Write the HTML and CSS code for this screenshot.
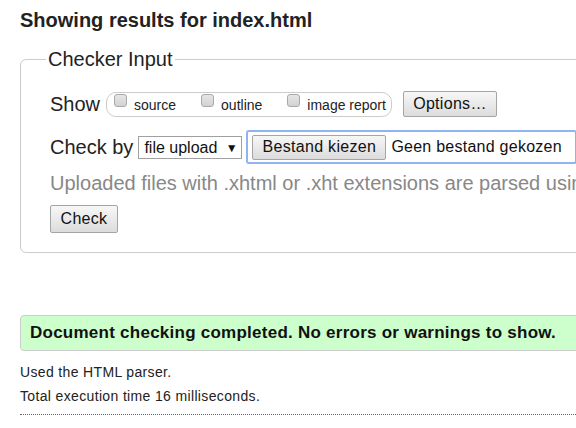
FILE: index.html
```html
<!DOCTYPE html>
<html lang="en">
<head>
<meta charset="utf-8">
<title>Showing results for index.html</title>
<link rel="stylesheet" href="styles.css">
</head>
<body>
<div class="page">
  <h2 class="title">Showing results for index.html</h2>
  <fieldset class="checker">
    <legend class="legend">Checker Input</legend>
    <div class="row row-show">
      <span class="label">Show</span>
      <div class="pill">
        <label class="opt"><span class="box"></span><span class="opt-text">source</span></label>
        <label class="opt"><span class="box"></span><span class="opt-text">outline</span></label>
        <label class="opt"><span class="box"></span><span class="opt-text">image report</span></label>
      </div>
      <button class="btn btn-options" type="button">Options…</button>
    </div>
    <div class="row row-check">
      <span class="label">Check by</span>
      <div class="select">file upload <span class="caret">▼</span></div>
      <div class="file">
        <button class="btn btn-file" type="button">Bestand kiezen</button>
        <span class="file-name">Geen bestand gekozen</span>
      </div>
    </div>
    <p class="hint">Uploaded files with .xhtml or .xht extensions are parsed using the XML parser.</p>
    <button class="btn btn-check" type="button">Check</button>
  </fieldset>
  <div class="success">Document checking completed. No errors or warnings to show.</div>
  <p class="meta meta-first">Used the HTML parser.</p>
  <p class="meta">Total execution time 16 milliseconds.</p>
  <hr class="sep">
</div>
</body>
</html>
```
FILE: styles.css
```css
html, body {
  margin: 0;
  padding: 0;
  overflow: hidden;
  background: #fff;
}
body {
  font-family: "Liberation Sans", Arial, sans-serif;
  color: #222;
}
.page {
  width: 680px;
  padding: 0 20px;
}
.title {
  margin: 9px 0 16px;
  font-size: 20px;
  line-height: 23px;
  font-weight: bold;
  color: #222;
}
.checker {
  margin: 0;
  border: 1px solid #ccc;
  border-radius: 6px;
  padding: 8px 20px 19px 29px;
  min-width: 0;
}
.legend {
  font-size: 20px;
  line-height: 23px;
  padding: 0 2px;
  margin-left: -4px;
  color: #222;
}
.row {
  display: flex;
  align-items: center;
  white-space: nowrap;
}
.label {
  font-size: 20px;
  line-height: 23px;
}
.row-show {
  margin-top: 12px;
}
.pill {
  display: flex;
  align-items: flex-start;
  margin-left: 6px;
  height: 23px;
  border: 1px solid #ccc;
  border-radius: 10px;
  padding: 0 5px 0 7px;
  gap: 25px;
}
.opt {
  display: flex;
  align-items: flex-start;
  gap: 7px;
}
.box {
  width: 11px;
  height: 11px;
  margin-top: 1px;
  border: 1px solid #a9a9a9;
  border-radius: 3px;
  background: linear-gradient(#e6e6e6, #d2d2d2);
}
.opt-text {
  font-size: 14px;
  line-height: 16px;
  margin-top: 4px;
}
.btn {
  font-family: "Liberation Sans", Arial, sans-serif;
  font-size: 16px;
  color: #111;
  background: linear-gradient(#f7f7f7, #dcdcdc);
  border: 1px solid #a5a5a5;
  border-radius: 2px;
  padding: 0;
  margin: 0;
  letter-spacing: 0.3px;
}
.btn-options {
  margin-left: 11px;
  width: 94px;
  height: 26px;
}
.row-check {
  margin-top: 13px;
}
.select {
  margin-left: 5px;
  width: 104px;
  height: 23px;
  box-sizing: border-box;
  border: 1px solid #a0a0a0;
  font-size: 16px;
  line-height: 21px;
  padding-left: 5px;
  color: #111;
}
.caret {
  font-size: 12px;
  vertical-align: 1px;
  margin-left: 4px;
}
.file {
  margin-left: 4px;
  display: flex;
  align-items: center;
  height: 34px;
  box-sizing: border-box;
  border: 2px solid #8fb4f2;
  border-radius: 3px;
  padding: 0 13px 0 4px;
}
.btn-file {
  width: 134px;
  height: 25px;
}
.file-name {
  margin-left: 5px;
  font-size: 16px;
  letter-spacing: 0.25px;
  color: #111;
}
.hint {
  margin: 8px 0 0;
  font-size: 20px;
  line-height: 23px;
  color: #888;
  white-space: nowrap;
}
.btn-check {
  margin-top: 10px;
  width: 68px;
  height: 28px;
}
.success {
  margin-top: 62px;
  height: 36px;
  box-sizing: border-box;
  border: 1px solid #ccc;
  border-radius: 4px;
  background: #ccffcc;
  padding-left: 9px;
  font-size: 17px;
  font-weight: bold;
  letter-spacing: 0.25px;
  line-height: 34px;
  color: #111;
  white-space: nowrap;
}
.meta {
  margin: 8px 0 0;
  font-size: 14px;
  line-height: 16px;
  letter-spacing: 0.35px;
  color: #222;
}
.meta-first {
  margin-top: 13px;
}
.sep {
  margin: 10px 0 0;
  border: 0;
  border-top: 1px dotted #666;
  height: 0;
}
```
